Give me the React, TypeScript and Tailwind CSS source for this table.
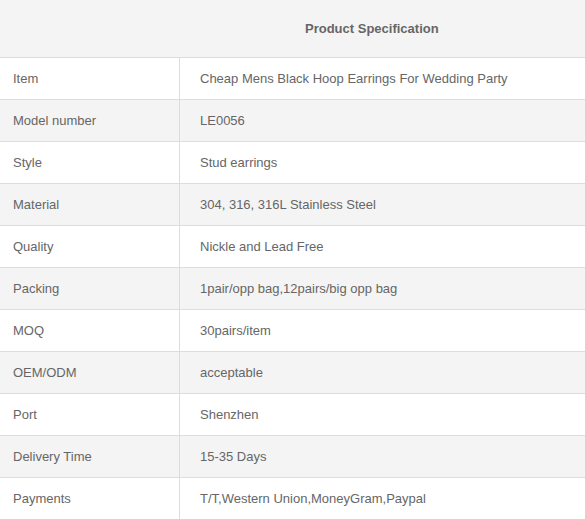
import React from "react";

const rows: [string, string][] = [
  ["Item", "Cheap Mens Black Hoop Earrings For Wedding Party"],
  ["Model number", "LE0056"],
  ["Style", "Stud earrings"],
  ["Material", "304, 316, 316L Stainless Steel"],
  ["Quality", "Nickle and Lead Free"],
  ["Packing", "1pair/opp bag,12pairs/big opp bag"],
  ["MOQ", "30pairs/item"],
  ["OEM/ODM", "acceptable"],
  ["Port", "Shenzhen"],
  ["Delivery Time", "15-35 Days"],
  ["Payments", "T/T,Western Union,MoneyGram,Paypal"],
];

export default function App() {
  return (
    <div
      className="w-[585px] h-[519px] overflow-hidden bg-white text-[13px] text-[#666]"
      style={{ fontFamily: '"Liberation Sans", Arial, sans-serif' }}
    >
      <div className="h-[58px] bg-[#f4f4f4] border-b border-[#dddddd] flex items-center">
        <div className="pl-[305px] font-bold text-[13px] text-[#666]">Product Specification</div>
      </div>
      {rows.map(([k, v], i) => (
        <div
          key={k}
          className={`flex h-[42px] border-b border-[#dddddd] ${i % 2 === 1 ? "bg-[#f4f4f4]" : "bg-white"}`}
        >
          <div className="w-[180px] shrink-0 border-r border-[#dddddd] flex items-center pl-[13px]">{k}</div>
          <div className="flex-1 flex items-center pl-5">{v}</div>
        </div>
      ))}
    </div>
  );
}
